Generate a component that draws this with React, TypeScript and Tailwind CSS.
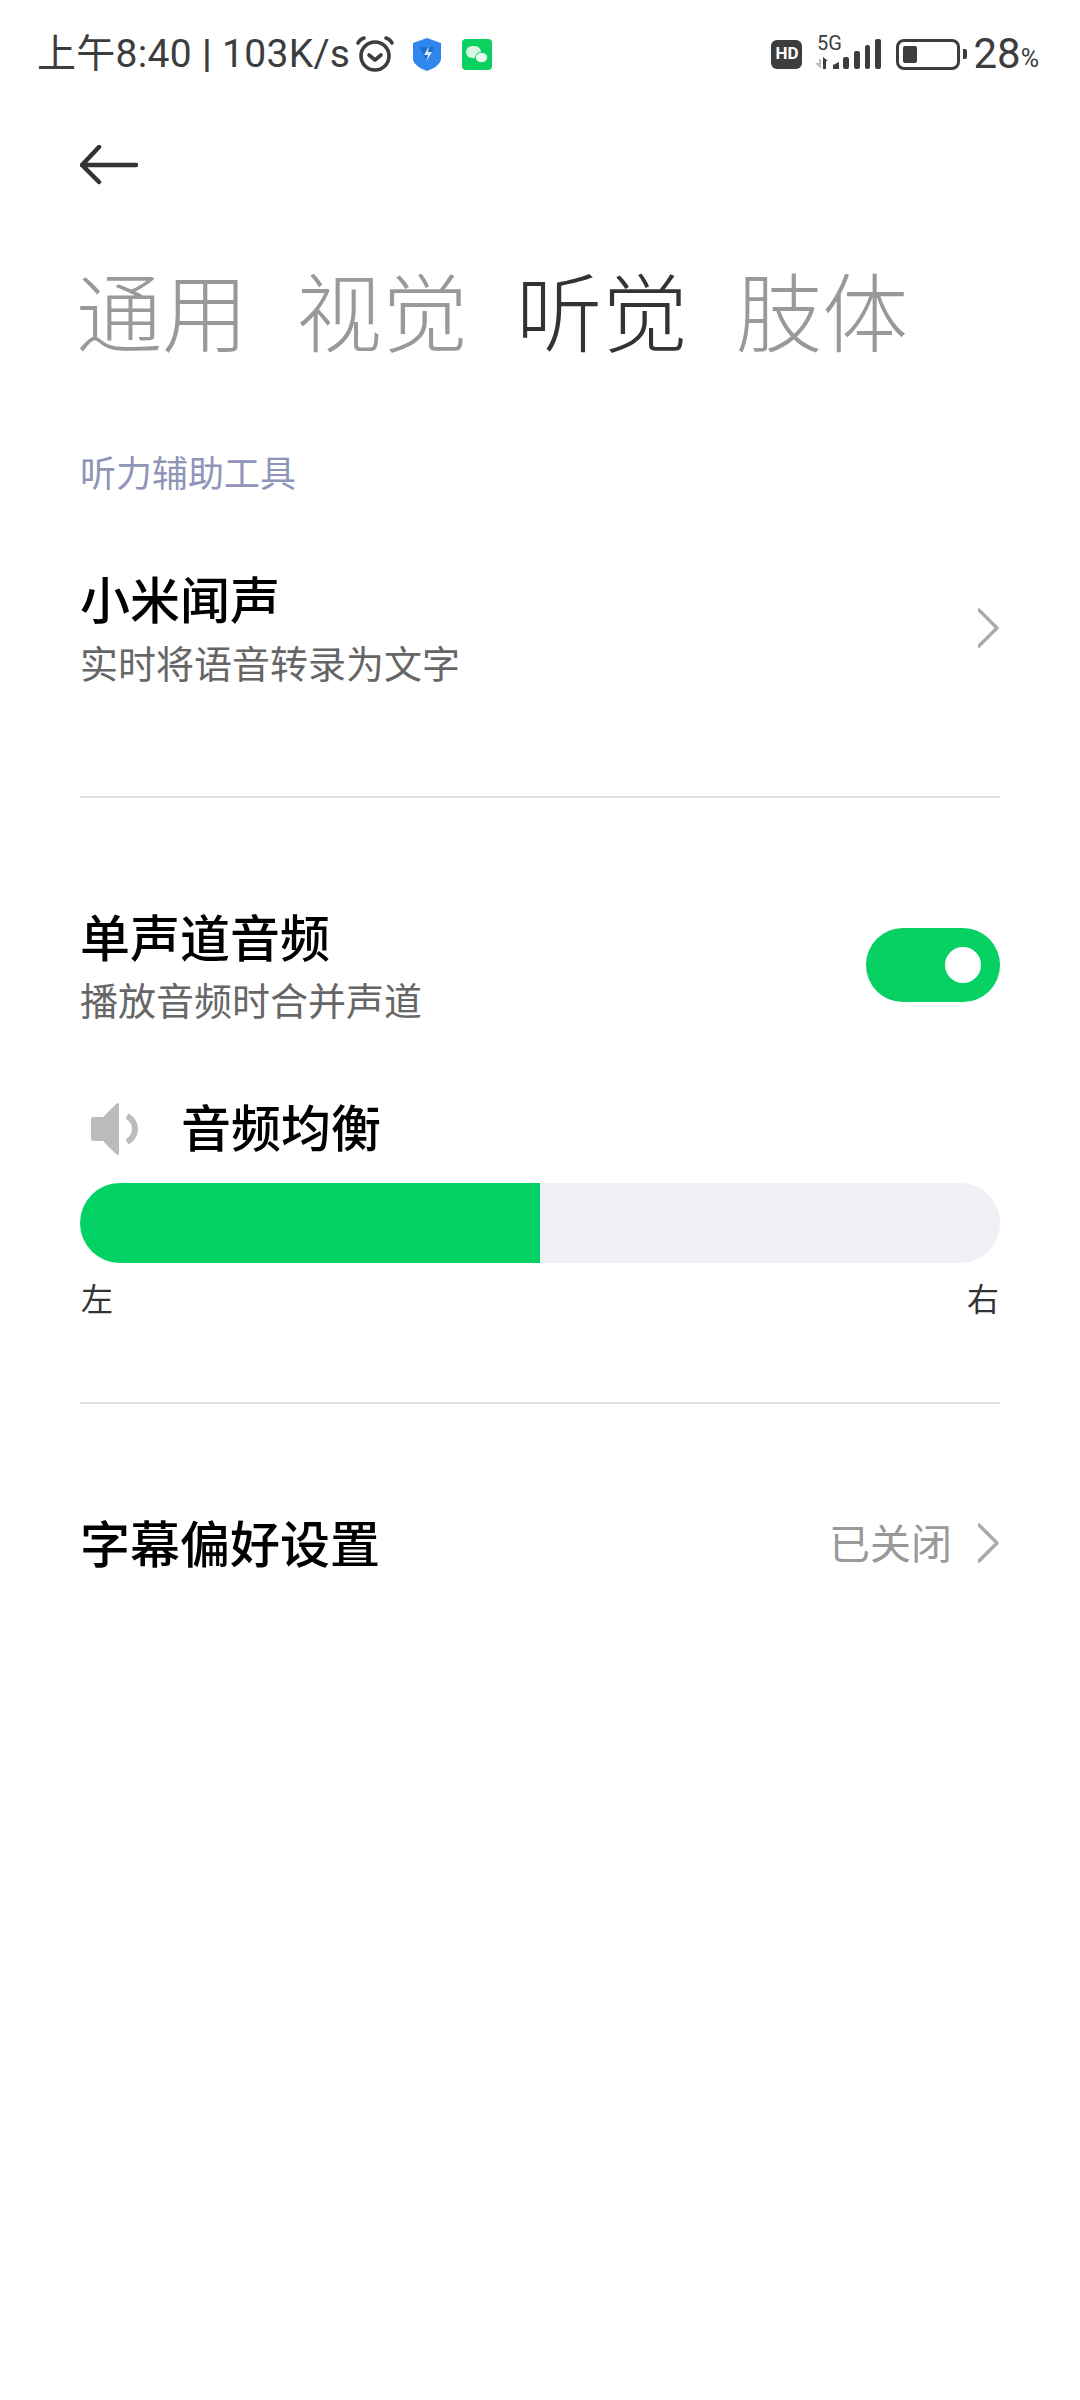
const CJK = "font-['Noto_Sans_CJK_SC','Noto_Sans',sans-serif]";

function StatusBar() {
  return (
    <div className="h-[66px] pt-[42px] pl-[37px] pr-[41px] flex items-center justify-between text-[#3d3d3d]">
      <div className="flex items-center">
        <span className="text-[39px] leading-[40px] font-['Roboto','Noto_Sans_CJK_SC',sans-serif] tracking-[0.3px] whitespace-nowrap">
          上午8:40 <span className="font-semibold">|</span> 103K/s
        </span>
        <svg width="40" height="40" viewBox="0 0 40 40" className="ml-[5px]" fill="none" stroke="#3d3d3d" strokeWidth="3.6" strokeLinecap="round" strokeLinejoin="round">
          <circle cx="20" cy="22" r="14" />
          <path d="M14 21l6 5 6-5" />
          <path d="M3 9c1-2 3-4 6-5M37 9c-1-2-3-4-6-5" />
        </svg>
        <svg width="28" height="33" viewBox="0 0 28 33" className="ml-[18px]">
          <path d="M14 0l14 5v16c0 5-8 10-14 12C8 31 0 26 0 21V5z" fill="#2f86ee" />
          <path d="M7 9l14 0-7 15z" fill="#1f6cc9" />
          <path d="M16 8l-5 9h4l-2 7 6-10h-4z" fill="#d4e8fc" />
        </svg>
        <div className="ml-[21px] w-[30px] h-[31px] rounded-[4px] bg-[#0ad160] relative">
          <span className="absolute left-[4px] top-[7px] w-[15px] h-[12px] rounded-full bg-[#d8f7e3]" />
          <span className="absolute left-[13px] top-[13px] w-[13px] h-[11px] rounded-full bg-[#e9fbef] border border-[#0ad160]" />
        </div>
      </div>
      <div className="flex items-center">
        <div className="w-[31px] h-[29px] rounded-[6px] bg-[#3d3d3d] flex items-center justify-center text-white text-[17px] font-bold font-['Roboto',sans-serif]">
          HD
        </div>
        <svg width="68" height="34" viewBox="0 0 68 34" className="ml-[12px] overflow-visible">
          <text x="3" y="13" fontSize="20" fill="#3d3d3d" fontFamily="Roboto">5G</text>
          <path d="M1 26h4v-4h2v10z" fill="#bdbdbd" />
          <path d="M9 20l5 4h-2v8H9z" fill="#3d3d3d" />
          <path d="M19 32v-4l6-3v7z" fill="#3d3d3d" />
          <rect x="29" y="20" width="6" height="12" rx="2" fill="#3d3d3d" />
          <rect x="40" y="14" width="6" height="18" rx="2" fill="#3d3d3d" />
          <rect x="51" y="8" width="5" height="24" rx="2" fill="#3d3d3d" />
          <rect x="61" y="2" width="6" height="30" rx="2" fill="#3d3d3d" />
        </svg>
        <div className="ml-[14px] w-[64px] h-[31px] rounded-[8px] border-[3px] border-[#3d3d3d] p-[4px]">
          <div className="w-[14px] h-full bg-[#3d3d3d] rounded-[2px]" />
        </div>
        <div className="ml-[3px] w-[4px] h-[10px] rounded-r-[2px] bg-[#3d3d3d]" />
        <span className="ml-[6px] text-[42px] leading-[40px] font-['Roboto',sans-serif]">28</span>
        <span className="text-[25px] leading-[24px] mt-[10px] font-['Roboto',sans-serif]">%</span>
      </div>
    </div>
  );
}

function Chevron() {
  return (
    <svg width="22" height="40" viewBox="0 0 22 40" className="mt-[3px]" fill="none" stroke="#aaaaaa" strokeWidth="3.4" strokeLinecap="round" strokeLinejoin="round">
      <path d="M1 2l18 18L1 38" />
    </svg>
  );
}

export default function App() {
  return (
    <div className={`w-[1080px] h-[2400px] bg-white overflow-hidden ${CJK}`}>
      <StatusBar />
      <div className="pl-[80px] pt-[79px]">
        <svg width="58" height="40" viewBox="0 0 58 40" fill="none" stroke="#333333" strokeWidth="4.5" strokeLinecap="round" strokeLinejoin="round">
          <path d="M19 2L2 20l17 17M2 20h54" />
        </svg>
      </div>
      <div className="pl-[76px] mt-[64px] flex gap-[48px] text-[86px] leading-[120px] font-light text-[#999999]">
        <span>通用</span>
        <span>视觉</span>
        <span className="text-[#333333]">听觉</span>
        <span>肢体</span>
      </div>
      <div className="px-[80px]">
        <div className="mt-[77px] text-[36px] leading-[50px] text-[#8f94b8]">听力辅助工具</div>
        <div className="mt-[68px] flex items-center justify-between">
          <div>
            <div className="text-[50px] leading-[66px] font-medium text-black">小米闻声</div>
            <div className="mt-[6px] text-[38px] leading-[52px] text-[#666666]">实时将语音转录为文字</div>
          </div>
          <Chevron />
        </div>
        <div className="mt-[108px] h-[2px] bg-[#e0e0e0]" />
        <div className="mt-[104px] flex items-center justify-between">
          <div>
            <div className="text-[50px] leading-[66px] font-medium text-black">单声道音频</div>
            <div className="mt-[5px] text-[38px] leading-[52px] text-[#666666]">播放音频时合并声道</div>
          </div>
          <div className="mt-[2px] w-[134px] h-[74px] rounded-full bg-[#07d163] flex items-center justify-end pr-[19px]">
            <div className="w-[36px] h-[36px] rounded-full bg-white" />
          </div>
        </div>
        <div className="mt-[67px] flex items-center">
          <svg width="48" height="54" viewBox="0 0 48 54" className="ml-[11px] mt-[8px]" fill="none">
            <path d="M0 17c0-1 1-2 2-2h10L25 2c2-2 3-1 3 1v48c0 2-1 3-3 1L12 39H2c-1 0-2-1-2-2z" fill="#bbbbbb" />
            <path d="M36 14c5 3 8 8 8 13s-3 10-8 13" stroke="#bbbbbb" strokeWidth="6" />
          </svg>
          <span className="ml-[42px] text-[50px] leading-[66px] font-medium text-black">音频均衡</span>
        </div>
        <div className="mt-[25px] h-[80px] rounded-full bg-[#eef0f5] overflow-hidden">
          <div className="w-[460px] h-full bg-[#02d163]" />
        </div>
        <div className="mt-[11px] flex justify-between text-[32px] leading-[46px] text-[#333333] px-[1px]">
          <span>左</span>
          <span>右</span>
        </div>
        <div className="mt-[82px] h-[2px] bg-[#e0e0e0]" />
        <div className="mt-[104px] flex items-center justify-between">
          <span className="text-[50px] leading-[66px] font-medium text-black">字幕偏好设置</span>
          <div className="flex items-center gap-[26px]">
            <span className="text-[41px] leading-[56px] text-[#999999]">已关闭</span>
            <Chevron />
          </div>
        </div>
      </div>
    </div>
  );
}
